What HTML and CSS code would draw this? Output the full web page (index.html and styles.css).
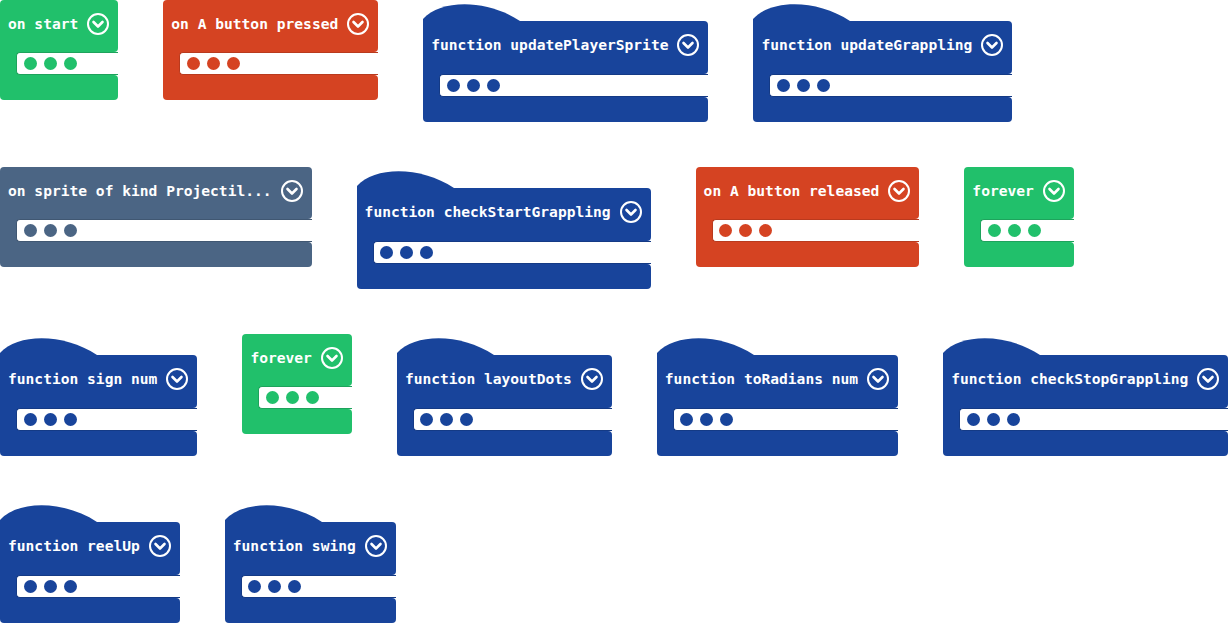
FILE: index.html
```html
<!DOCTYPE html>
<html>
<head>
    <title>Blocks workspace</title>
    <link rel="stylesheet" href="styles.css">
</head>
<body>
    <div class="workspace">
        <!-- row 1 -->
        <div class="row">
            <div class="block green">
                <div class="head"><span class="label">on start</span><svg class="toggle" viewBox="0 0 22 22"><circle cx="11" cy="11" r="10"/><polyline points="6.5,9 11,13.5 15.5,9"/></svg></div>
                <div class="slot"><div class="strip"><i></i><i></i><i></i></div></div>
                <div class="foot"></div>
            </div>
            <div class="block red">
                <div class="head"><span class="label">on A button pressed</span><svg class="toggle" viewBox="0 0 22 22"><circle cx="11" cy="11" r="10"/><polyline points="6.5,9 11,13.5 15.5,9"/></svg></div>
                <div class="slot"><div class="strip"><i></i><i></i><i></i></div></div>
                <div class="foot"></div>
            </div>
            <div class="block blue fn">
                <svg class="hat" viewBox="0 0 97 21"><path d="M0,21 L0,19 C18,-1 64,-1 97,21 Z"/></svg>
                <div class="head"><span class="label">function updatePlayerSprite</span><svg class="toggle" viewBox="0 0 22 22"><circle cx="11" cy="11" r="10"/><polyline points="6.5,9 11,13.5 15.5,9"/></svg></div>
                <div class="slot"><div class="strip"><i></i><i></i><i></i></div></div>
                <div class="foot"></div>
            </div>
            <div class="block blue fn">
                <svg class="hat" viewBox="0 0 97 21"><path d="M0,21 L0,19 C18,-1 64,-1 97,21 Z"/></svg>
                <div class="head"><span class="label">function updateGrappling</span><svg class="toggle" viewBox="0 0 22 22"><circle cx="11" cy="11" r="10"/><polyline points="6.5,9 11,13.5 15.5,9"/></svg></div>
                <div class="slot"><div class="strip"><i></i><i></i><i></i></div></div>
                <div class="foot"></div>
            </div>
        </div>

        <!-- row 2 -->
        <div class="row">
            <div class="block slate">
                <div class="head"><span class="label">on sprite of kind Projectil...</span><svg class="toggle" viewBox="0 0 22 22"><circle cx="11" cy="11" r="10"/><polyline points="6.5,9 11,13.5 15.5,9"/></svg></div>
                <div class="slot"><div class="strip"><i></i><i></i><i></i></div></div>
                <div class="foot"></div>
            </div>
            <div class="block blue fn">
                <svg class="hat" viewBox="0 0 97 21"><path d="M0,21 L0,19 C18,-1 64,-1 97,21 Z"/></svg>
                <div class="head"><span class="label">function checkStartGrappling</span><svg class="toggle" viewBox="0 0 22 22"><circle cx="11" cy="11" r="10"/><polyline points="6.5,9 11,13.5 15.5,9"/></svg></div>
                <div class="slot"><div class="strip"><i></i><i></i><i></i></div></div>
                <div class="foot"></div>
            </div>
            <div class="block red">
                <div class="head"><span class="label">on A button released</span><svg class="toggle" viewBox="0 0 22 22"><circle cx="11" cy="11" r="10"/><polyline points="6.5,9 11,13.5 15.5,9"/></svg></div>
                <div class="slot"><div class="strip"><i></i><i></i><i></i></div></div>
                <div class="foot"></div>
            </div>
            <div class="block green">
                <div class="head"><span class="label">forever</span><svg class="toggle" viewBox="0 0 22 22"><circle cx="11" cy="11" r="10"/><polyline points="6.5,9 11,13.5 15.5,9"/></svg></div>
                <div class="slot"><div class="strip"><i></i><i></i><i></i></div></div>
                <div class="foot"></div>
            </div>
        </div>

        <!-- row 3 -->
        <div class="row">
            <div class="block blue fn">
                <svg class="hat" viewBox="0 0 97 21"><path d="M0,21 L0,19 C18,-1 64,-1 97,21 Z"/></svg>
                <div class="head"><span class="label">function sign num</span><svg class="toggle" viewBox="0 0 22 22"><circle cx="11" cy="11" r="10"/><polyline points="6.5,9 11,13.5 15.5,9"/></svg></div>
                <div class="slot"><div class="strip"><i></i><i></i><i></i></div></div>
                <div class="foot"></div>
            </div>
            <div class="block green">
                <div class="head"><span class="label">forever</span><svg class="toggle" viewBox="0 0 22 22"><circle cx="11" cy="11" r="10"/><polyline points="6.5,9 11,13.5 15.5,9"/></svg></div>
                <div class="slot"><div class="strip"><i></i><i></i><i></i></div></div>
                <div class="foot"></div>
            </div>
            <div class="block blue fn">
                <svg class="hat" viewBox="0 0 97 21"><path d="M0,21 L0,19 C18,-1 64,-1 97,21 Z"/></svg>
                <div class="head"><span class="label">function layoutDots</span><svg class="toggle" viewBox="0 0 22 22"><circle cx="11" cy="11" r="10"/><polyline points="6.5,9 11,13.5 15.5,9"/></svg></div>
                <div class="slot"><div class="strip"><i></i><i></i><i></i></div></div>
                <div class="foot"></div>
            </div>
            <div class="block blue fn">
                <svg class="hat" viewBox="0 0 97 21"><path d="M0,21 L0,19 C18,-1 64,-1 97,21 Z"/></svg>
                <div class="head"><span class="label">function toRadians num</span><svg class="toggle" viewBox="0 0 22 22"><circle cx="11" cy="11" r="10"/><polyline points="6.5,9 11,13.5 15.5,9"/></svg></div>
                <div class="slot"><div class="strip"><i></i><i></i><i></i></div></div>
                <div class="foot"></div>
            </div>
            <div class="block blue fn">
                <svg class="hat" viewBox="0 0 97 21"><path d="M0,21 L0,19 C18,-1 64,-1 97,21 Z"/></svg>
                <div class="head"><span class="label">function checkStopGrappling</span><svg class="toggle" viewBox="0 0 22 22"><circle cx="11" cy="11" r="10"/><polyline points="6.5,9 11,13.5 15.5,9"/></svg></div>
                <div class="slot"><div class="strip"><i></i><i></i><i></i></div></div>
                <div class="foot"></div>
            </div>
        </div>

        <!-- row 4 -->
        <div class="row">
            <div class="block blue fn">
                <svg class="hat" viewBox="0 0 97 21"><path d="M0,21 L0,19 C18,-1 64,-1 97,21 Z"/></svg>
                <div class="head"><span class="label">function reelUp</span><svg class="toggle" viewBox="0 0 22 22"><circle cx="11" cy="11" r="10"/><polyline points="6.5,9 11,13.5 15.5,9"/></svg></div>
                <div class="slot"><div class="strip"><i></i><i></i><i></i></div></div>
                <div class="foot"></div>
            </div>
            <div class="block blue fn">
                <svg class="hat" viewBox="0 0 97 21"><path d="M0,21 L0,19 C18,-1 64,-1 97,21 Z"/></svg>
                <div class="head"><span class="label">function swing</span><svg class="toggle" viewBox="0 0 22 22"><circle cx="11" cy="11" r="10"/><polyline points="6.5,9 11,13.5 15.5,9"/></svg></div>
                <div class="slot"><div class="strip"><i></i><i></i><i></i></div></div>
                <div class="foot"></div>
            </div>
        </div>
    </div>
</body>
</html>
```

FILE: styles.css
```css
html, body {
    margin: 0;
    padding: 0;
    background: #ffffff;
    overflow: hidden;
}

.workspace {
    display: flex;
    flex-direction: column;
    gap: 45px;
    width: 1260px;
}

.row {
    display: flex;
    align-items: flex-start;
    gap: 45px;
}

/* block colours */
.green { --c: #21c06b; --edge: #1ea35c; }
.red   { --c: #d54322; --edge: #b93a1e; }
.blue  { --c: #18449b; --edge: #143a85; }
.slate { --c: #4b6584; --edge: #405772; }

.block {
    display: flex;
    flex-direction: column;
    font-family: "DejaVu Sans Mono", "Liberation Mono", monospace;
    font-weight: bold;
    font-size: 14.6px;
    color: #ffffff;
}

.hat {
    display: block;
    width: 97px;
    height: 21px;
}
.hat path {
    fill: var(--c);
}

.head {
    display: flex;
    align-items: flex-start;
    height: 52px;
    box-sizing: border-box;
    padding: 13px 9px 0 8px;
    background: var(--c);
    border-radius: 4px 4px 4px 0;
}
.fn .head {
    height: 53px;
    border-radius: 0 4px 4px 0;
}

.label {
    line-height: 22px;
    white-space: pre;
    margin-right: 9px;
}

.toggle {
    width: 22px;
    height: 22px;
    flex: none;
}
.toggle circle {
    fill: none;
    stroke: #ffffff;
    stroke-width: 2;
}
.toggle polyline {
    fill: none;
    stroke: #ffffff;
    stroke-width: 2.6;
    stroke-linecap: round;
    stroke-linejoin: round;
}

.slot {
    display: flex;
    height: 23px;
    background: linear-gradient(to right, var(--c) 20px, transparent 20px);
}

.strip {
    flex: 1;
    display: flex;
    align-items: center;
    gap: 7px;
    margin-left: 16px;
    padding-left: 6.5px;
    box-sizing: border-box;
    background: #ffffff;
    border: 1px solid var(--edge);
    border-right: none;
    border-radius: 4px 0 0 4px;
}
.strip i {
    width: 13px;
    height: 13px;
    border-radius: 50%;
    background: var(--c);
}

.foot {
    height: 25px;
    background: var(--c);
    border-radius: 0 4px 4px 4px;
}
```
